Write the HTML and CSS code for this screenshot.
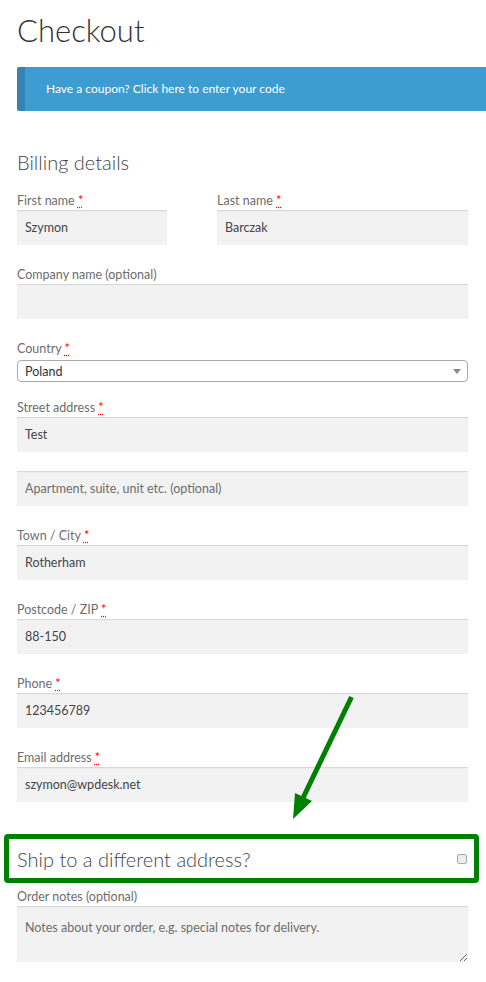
FILE: index.html
```html
<!DOCTYPE html>
<html>
<head>
    <title>Checkout</title>
    <link rel="stylesheet" href="styles.css">
</head>
<body>
<div class="page">
    <h1 class="page-title">Checkout</h1>

    <div class="coupon-info">Have a coupon? <a href="#">Click here to enter your code</a></div>

    <form class="checkout">
        <h3 class="section-title">Billing details</h3>

        <div class="row-split">
            <p class="field">
                <label>First name <abbr class="required">*</abbr></label>
                <input class="input-text" type="text" value="Szymon">
            </p>
            <p class="field">
                <label>Last name <abbr class="required">*</abbr></label>
                <input class="input-text" type="text" value="Barczak">
            </p>
        </div>

        <p class="field">
            <label>Company name (optional)</label>
            <input class="input-text" type="text" value="">
        </p>

        <p class="field field-select">
            <label>Country <abbr class="required">*</abbr></label>
            <span class="select-box">
                <span class="select-value">Poland</span>
                <b class="select-arrow"></b>
            </span>
        </p>

        <p class="field">
            <label>Street address <abbr class="required">*</abbr></label>
            <input class="input-text" type="text" value="Test">
        </p>
        <p class="field">
            <input class="input-text" type="text" placeholder="Apartment, suite, unit etc. (optional)">
        </p>

        <p class="field">
            <label>Town / City <abbr class="required">*</abbr></label>
            <input class="input-text" type="text" value="Rotherham">
        </p>

        <p class="field">
            <label>Postcode / ZIP <abbr class="required">*</abbr></label>
            <input class="input-text" type="text" value="88-150">
        </p>

        <p class="field">
            <label>Phone <abbr class="required">*</abbr></label>
            <input class="input-text" type="text" value="123456789">
        </p>

        <p class="field">
            <label>Email address <abbr class="required">*</abbr></label>
            <input class="input-text" type="text" value="szymon@wpdesk.net">
        </p>

        <div class="ship-box">
            <h3 class="ship-title">Ship to a different address?</h3>
            <input class="ship-check" type="checkbox">
        </div>

        <p class="field">
            <label>Order notes (optional)</label>
            <textarea class="input-text notes" placeholder="Notes about your order, e.g. special notes for delivery."></textarea>
        </p>
    </form>

    <!-- annotation arrow -->
    <svg class="pointer" width="486" height="982" viewBox="0 0 486 982">
        <line x1="351.5" y1="697" x2="302" y2="800" stroke="#008000" stroke-width="5"/>
        <polygon points="293,819 295,793 312,801" fill="#008000"/>
    </svg>
</div>
</body>
</html>
```

FILE: styles.css
```css
body {
    margin: 0;
    padding: 0;
    background: #fff;
    font-family: Lato, "Liberation Sans", sans-serif;
    color: #43454b;
}

.page {
    position: relative;
    width: 451px;
    padding: 10px 18px 0 17px;
    min-height: 972px;
}

.page-title {
    margin: 0;
    font-size: 31px;
    font-weight: 300;
    line-height: 40px;
    color: #333;
}

.coupon-info {
    margin: 17px -18px 0 0;
    height: 44px;
    line-height: 44px;
    padding-left: 21px;
    background: #3d9cd2;
    border-left: 8px solid #3585b4;
    border-radius: 2px 0 0 2px;
    color: #fff;
    font-size: 12px;
}

.coupon-info a {
    color: #fff;
    text-decoration: none;
}

.checkout {
    margin: 0;
}

.section-title {
    margin: 38px 0 15px;
    font-size: 20px;
    font-weight: 300;
    line-height: 26px;
    color: #43454b;
}

.row-split {
    display: grid;
    grid-template-columns: 150px 251px;
    column-gap: 50px;
}

.field {
    margin: 0 0 19px;
}

.field label {
    display: block;
    height: 20px;
    line-height: 21px;
    font-size: 12.5px;
    color: #6d6d6d;
}

.required {
    color: #f00;
    text-decoration: underline dotted #f00;
    text-underline-offset: 2px;
    cursor: help;
}

.input-text {
    display: block;
    box-sizing: border-box;
    width: 100%;
    height: 35px;
    margin: 0;
    padding: 0 8px;
    border: 0;
    background: #f2f2f2;
    box-shadow: inset 0 1px 1px rgba(0, 0, 0, 0.125);
    font-family: Lato, "Liberation Sans", sans-serif;
    font-size: 12.5px;
    color: #43454b;
    outline: none;
}

.input-text::placeholder {
    color: #6d6d6d;
}

.field-select {
    margin-bottom: 15px;
}

.select-box {
    display: flex;
    align-items: center;
    justify-content: space-between;
    box-sizing: border-box;
    height: 22px;
    margin-top: 2px;
    padding: 0 6px 0 7px;
    border: 1px solid #aaa;
    border-radius: 4px;
    background: #fff;
    font-size: 12.5px;
    color: #333;
}

.select-arrow {
    width: 0;
    height: 0;
    border-left: 4px solid transparent;
    border-right: 4px solid transparent;
    border-top: 5px solid #888;
}

.notes {
    height: 56px;
    padding: 14px 8px 8px;
    resize: vertical;
    line-height: 16px;
}

.ship-box {
    display: flex;
    align-items: center;
    justify-content: space-between;
    margin: 32px -11px 3px -13px;
    height: 39px;
    padding: 0 7px 0 8px;
    border: 5px solid #008000;
    border-radius: 4px;
}

.ship-title {
    margin: 0;
    font-size: 20px;
    font-weight: 300;
    color: #43454b;
}

.ship-check {
    appearance: none;
    width: 10px;
    height: 10px;
    margin: 0;
    border: 1px solid #aaa;
    border-radius: 2px;
    background: #ececec;
}

.pointer {
    position: absolute;
    left: 0;
    top: 0;
    pointer-events: none;
}
```
